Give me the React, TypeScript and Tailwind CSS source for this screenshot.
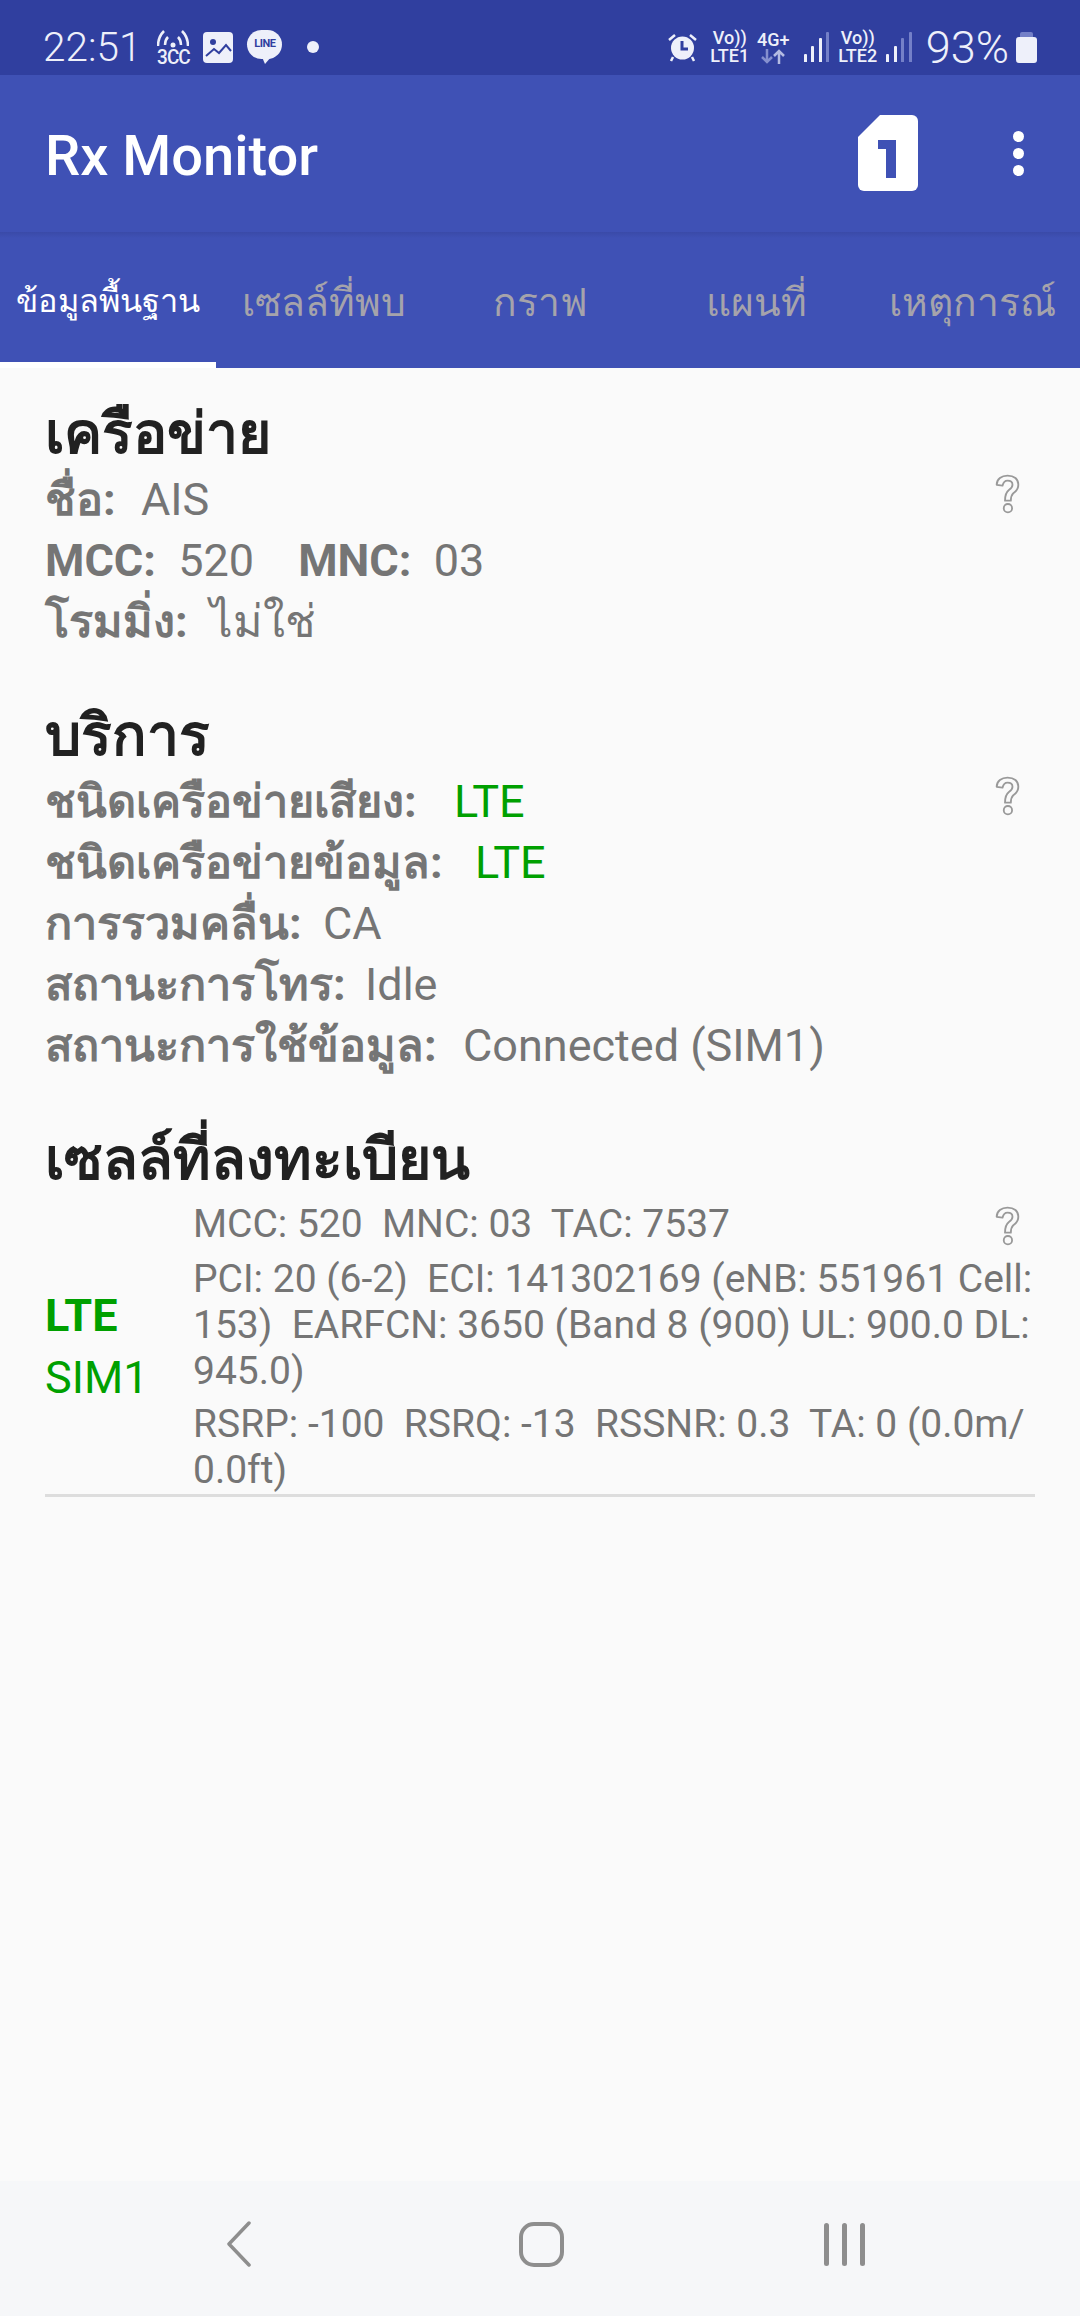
import React from 'react';

const font = "font-['Roboto','Noto_Sans',sans-serif]";

function Help() {
  return (
    <svg width="25" height="40" viewBox="0 0 30 48" fill="none" stroke="#999999" strokeWidth="2.2" className="absolute right-[15px] top-[5px]">
      <path d="M2 13C2 6 8 2 15 2c8 0 13 4 13 11 0 6-3 8-6 10-2 2-3 4-3 9h-7c0-7 1-10 5-13 3-2 4-3 4-6 0-3-2-5-6-5-3 0-5 2-6 6z" strokeLinejoin="round" />
      <circle cx="15.5" cy="41" r="5" />
    </svg>
  );
}

function Row({ label, value, green, shift }: { label: string; value: string; green?: boolean; shift?: string }) {
  return (
    <div className="h-[61px] leading-[61px] whitespace-pre">
      <span className="font-bold">{label}:</span>
      <span className={`${green ? 'text-[#00a000]' : ''} ${shift ?? ''}`}>{'  ' + value}</span>
    </div>
  );
}

function Signal({ className, full }: { className: string; full: number }) {
  const bars = [8, 16, 24, 30];
  return (
    <div className={`flex items-end gap-[4.5px] h-[30px] ${className}`}>
      {bars.map((h, i) => (
        <div key={i} className={i < full ? 'w-[3px] bg-[#eef0fa] rounded-t-[1px]' : 'w-[3px] bg-[#7480c8] rounded-t-[1px]'} style={{ height: h }} />
      ))}
    </div>
  );
}

function StatusBar() {
  return (
    <div className="h-[75px] bg-[#303f9f] flex items-center pl-[43px] pr-[43px] text-[#eef0fa] pt-[19px]">
      <span className="text-[40.5px] font-light leading-none">22:51</span>
      <div className="ml-[16px] flex flex-col items-center w-[32px] leading-none mt-[1px]">
        <svg width="32" height="18" viewBox="0 0 32 18" fill="none" stroke="#eef0fa" strokeWidth="2.5">
          <path d="M1 16C1 9 3 5 7 1M31 16c0-7-2-11-6-15M8 15c0-3 1-6 3-8M24 15c0-3-1-6-3-8" />
          <circle cx="16" cy="15" r="2.5" fill="#eef0fa" stroke="none" />
        </svg>
        <span className="text-[19px] font-medium tracking-[-1px] mt-[-1px] scale-y-[1.1]">3CC</span>
      </div>
      <svg className="ml-[14px]" width="30" height="31" viewBox="0 0 30 31">
        <rect width="30" height="31" rx="4" fill="#eef0fa" />
        <circle cx="10" cy="10" r="3" fill="#303f9f" />
        <path d="M3 24l8-7 5 4 7-8 5 6" stroke="#303f9f" strokeWidth="2" fill="none" />
      </svg>
      <div className="ml-[14px] relative w-[35px] h-[34px]">
        <div className="absolute top-0 left-0 w-[35px] h-[29px] rounded-full bg-[#eef0fa] flex items-center justify-center text-[#303f9f] text-[11px] font-bold tracking-[-0.5px]">LINE</div>
        <div className="absolute left-[15px] top-[27px] w-0 h-0 border-l-[3px] border-r-[6px] border-t-[7px] border-l-transparent border-r-transparent border-t-[#eef0fa]" />
      </div>
      <div className="ml-[25px] w-[12px] h-[12px] rounded-full bg-[#eef0fa]" />
      <div className="ml-auto flex items-center">
        <svg width="29" height="30" viewBox="0 0 29 30" fill="#eef0fa">
          <circle cx="14.5" cy="16" r="11.5" />
          <path d="M1 8l6-5M28 8l-6-5" stroke="#eef0fa" strokeWidth="2.5" />
          <path d="M5 25l-2 4M24 25l2 4" stroke="#eef0fa" strokeWidth="2.5" />
          <path d="M14 9v8h6" stroke="#303f9f" strokeWidth="3" fill="none" />
        </svg>
        <div className="ml-[14px] flex flex-col items-center leading-none w-[38px] text-[18px] font-medium">
          <span>Vo))</span>
          <span className="whitespace-nowrap">LTE1</span>
        </div>
        <div className="ml-[8px] flex flex-col items-center leading-none w-[33px]">
          <span className="text-[18px] font-medium">4G+</span>
          <svg width="24" height="15" viewBox="0 0 24 15" fill="none" stroke="#8690cf" strokeWidth="2.5">
            <path d="M6 0v13M1 8l5 5 5-5" />
            <path d="M18 15V2M13 7l5-5 5 5" stroke="#b4bbe2" />
          </svg>
        </div>
        <Signal className="ml-[14px]" full={3} />
        <div className="ml-[9px] flex flex-col items-center leading-none w-[39px] text-[18px] font-medium">
          <span>Vo))</span>
          <span className="whitespace-nowrap">LTE2</span>
        </div>
        <Signal className="ml-[9px]" full={2} />
        <span className="ml-[14px] text-[45px] font-light leading-none">93%</span>
        <svg className="ml-[7px]" width="21" height="31" viewBox="0 0 21 31">
          <path d="M6 0h9a2 2 0 012 2v3h-13V2a2 2 0 012-2z" fill="#7480c8" />
          <rect y="5" width="21" height="26" rx="3" fill="#eef0fa" />
        </svg>
      </div>
    </div>
  );
}

export default function App() {
  const tabs = ['เซลล์ที่พบ', 'กราฟ', 'แผนที่', 'เหตุการณ์'];
  return (
    <div className={`w-[1080px] h-[2316px] flex flex-col bg-[#fafafa] overflow-hidden ${font}`}>
      <StatusBar />

      <div className="h-[157px] bg-[#3f51b5] flex items-center pl-[45px] text-white">
        <span className="text-[56px] font-medium pt-[4px]">Rx Monitor</span>
        <svg className="ml-auto mr-[95px] mb-[2px]" width="60" height="76" viewBox="0 0 60 76">
          <path d="M22 0h32a6 6 0 016 6v64a6 6 0 01-6 6H6a6 6 0 01-6-6V22z" fill="#fff" />
          <path d="M20 25h18v38h-10V34h-8z" fill="#3f51b5" />
        </svg>
        <div className="mr-[56px] flex flex-col gap-[6px]">
          <div className="w-[11px] h-[11px] rounded-full bg-white" />
          <div className="w-[11px] h-[11px] rounded-full bg-white" />
          <div className="w-[11px] h-[11px] rounded-full bg-white" />
        </div>
      </div>

      <div className="h-[136px] bg-[#3f51b5] flex relative">
        <div className="absolute inset-x-0 top-0 h-[6px] bg-gradient-to-b from-[#3a4aa8] to-transparent" />
        <div className="w-[216px] flex items-center justify-center border-b-[6px] border-white text-white text-[32.5px] pt-[8px]">ข้อมูลพื้นฐาน</div>
        {tabs.map((t) => (
          <div key={t} className="w-[216px] flex items-center justify-center text-[#a5a3ab] text-[39px] pt-[6px]">{t}</div>
        ))}
      </div>

      <div className="flex-1 pl-[45px] pr-[45px] pt-[31px] text-[45px] text-[#757575]">
        <section>
          <h2 className="text-[57px] font-bold text-[#212121] leading-[70px]">เครือข่าย</h2>
          <div className="relative">
            <Help />
            <Row label="ชื่อ" value="AIS" shift="ml-[3px]" />
          </div>
          <div className="h-[61px] leading-[61px] whitespace-pre">
            <span className="font-bold">MCC:</span>{'  520'}<span className="font-bold ml-[44px]">MNC:</span>{'  03'}
          </div>
          <Row label="โรมมิ่ง" value="ไม่ใช่" />
        </section>

        <section className="mt-[49px]">
          <h2 className="text-[57px] font-bold text-[#212121] leading-[70px]">บริการ</h2>
          <div className="relative">
            <Help />
            <Row label="ชนิดเครือข่ายเสียง" value="LTE" green shift="ml-[15px]" />
          </div>
          <Row label="ชนิดเครือข่ายข้อมูล" value="LTE" green shift="ml-[10px]" />
          <Row label="การรวมคลื่น" value="CA" shift="-ml-[1px]" />
          <Row label="สถานะการโทร" value="Idle" shift="-ml-[3px]" />
          <Row label="สถานะการใช้ข้อมูล" value="Connected (SIM1)" shift="ml-[4px]" />
        </section>

        <section className="mt-[49px]">
          <h2 className="text-[57px] font-bold text-[#212121] leading-[70px]">เซลล์ที่ลงทะเบียน</h2>
          <div className="flex items-center border-b-[3px] border-[#dddddd] mt-[6px] pb-[1px]">
            <div className="w-[148px] shrink-0 text-[#00a000] leading-[62px]">
              <div className="font-bold">LTE</div>
              <div>SIM1</div>
            </div>
            <div className="flex-1 text-[39px] leading-[46px] relative">
              <Help />
              <div className="whitespace-pre mb-[9px]">MCC: 520  MNC: 03  TAC: 7537</div>
              <div className="mb-[7px] whitespace-pre-wrap">PCI: 20 (6-2)  ECI: 141302169 (eNB: 551961 Cell: 153)  EARFCN: 3650 (Band 8 (900) UL: 900.0 DL: 945.0)</div>
              <div className="whitespace-pre-wrap">RSRP: -100  RSRQ: -13  RSSNR: 0.3  TA: 0 (0.0m/ 0.0ft)</div>
            </div>
          </div>
        </section>
      </div>

      <div className="h-[135px] bg-[#f6f7f9] flex items-center pl-[226px] pb-[9px]">
        <svg width="26" height="46" viewBox="0 0 26 46" fill="none" stroke="#8e8e8e" strokeWidth="3.5" strokeLinecap="round" strokeLinejoin="round">
          <path d="M23 2L3 23l20 21" />
        </svg>
        <div className="ml-[267px] w-[45px] h-[45px] border-[4px] border-[#8e8e8e] rounded-[15px]" />
        <div className="ml-[260px] flex gap-[13px]">
          <div className="w-[5px] h-[43px] rounded-full bg-[#8e8e8e]" />
          <div className="w-[5px] h-[43px] rounded-full bg-[#8e8e8e]" />
          <div className="w-[5px] h-[43px] rounded-full bg-[#8e8e8e]" />
        </div>
      </div>
    </div>
  );
}
